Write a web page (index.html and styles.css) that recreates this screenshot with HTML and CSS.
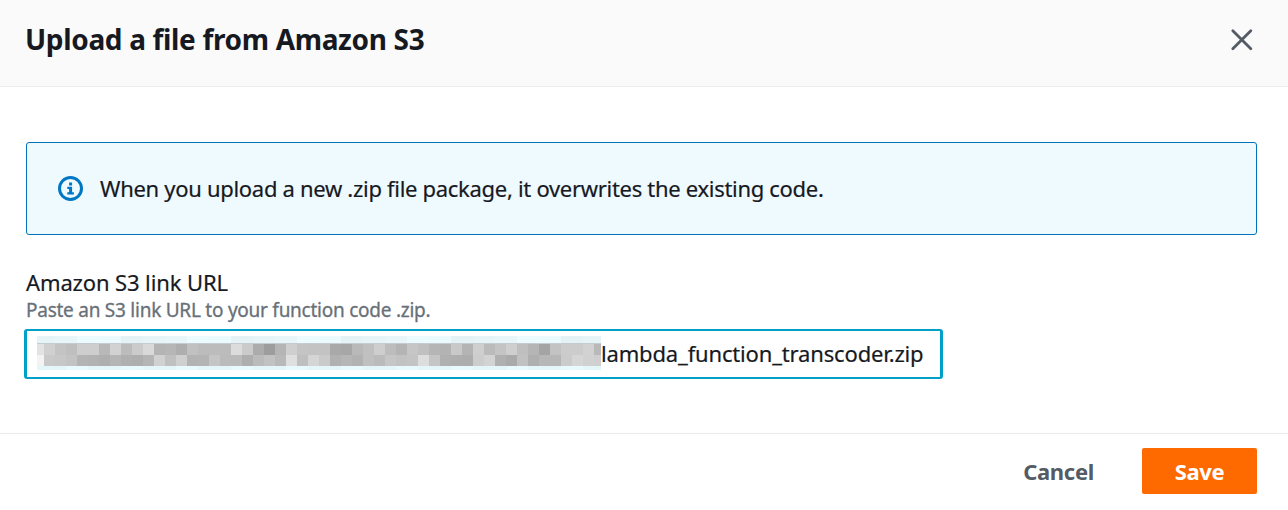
FILE: index.html
```html
<!DOCTYPE html>
<html lang="en">
<head>
<meta charset="utf-8">
<title>Upload a file from Amazon S3</title>
<link rel="stylesheet" href="styles.css">
</head>
<body>
<div class="modal">
  <header class="header">
    <h1 class="title"><span>Upload a file from Amazon S3</span></h1>
    <button class="close" aria-label="Close"><svg width="24" height="24" viewBox="0 0 24 24"><path d="M2.8 2.8 20.8 20.8M20.8 2.8 2.8 20.8"/></svg></button>
  </header>
  <main class="content">
    <div class="alert">
      <svg class="info" width="25" height="25" viewBox="0.5 0.5 25 25"><circle cx="13" cy="13" r="11"/><path d="M11.6 7h3v3h-3zM9.8 11.3h4.8v5.4h1.8v2.3H9.8v-2.3h1.8v-3.1H9.8z"/></svg>
      <span class="alert-text">When you upload a new .zip file package, it overwrites the existing code.</span>
    </div>
    <label class="label"><span>Amazon S3 link URL</span></label>
    <div class="hint"><span>Paste an S3 link URL to your function code .zip.</span></div>
    <div class="input"><svg class="mosaic" width="564" height="34" shape-rendering="crispEdges"></svg><span class="value">lambda_function_transcoder.zip</span></div>
  </main>
  <footer class="footer">
    <button class="cancel"><span>Cancel</span></button>
    <button class="save"><span>Save</span></button>
  </footer>
</div>
<script src="mosaic.js"></script>
</body>
</html>
```
FILE: styles.css
```css
* { box-sizing: border-box; }
body { margin: 0; background: #fff; color: #16191f; font-family: "Noto Sans", sans-serif; }
button { border: 0; background: none; padding: 0; font: inherit; }
span { white-space: nowrap; }
.modal { width: 1288px; height: 510px; display: flex; flex-direction: column; }
.header { height: 87px; background: #fafafa; border-bottom: 1px solid #eaeded; display: flex; justify-content: space-between; align-items: flex-start; padding: 20px 34px 0 25px; }
.title { margin: 0; font-size: 28px; line-height: 38px; font-weight: 700; letter-spacing: -0.33px; }
.close { height: 40px; display: flex; align-items: center; }
.close path { stroke: #545b64; stroke-width: 2.8; stroke-linecap: round; fill: none; }
.content { height: 346px; padding: 55px 31px 0 26px; }
.alert { height: 93px; border: 1px solid #0073bb; border-radius: 3px; background: #effaff; display: flex; align-items: center; padding-left: 31px; gap: 17px; font-size: 22px; }
.info circle { fill: none; stroke: #0077c2; stroke-width: 3; }
.info path { fill: #0077c2; }
.alert-text { letter-spacing: -0.3px; padding-bottom: 2px; -webkit-text-stroke: 0.2px; }
.label { display: block; margin-top: 33px; font-size: 22px; line-height: 28px; letter-spacing: -0.12px; -webkit-text-stroke: 0.2px; }
.hint { font-size: 19px; line-height: 28px; color: #687078; letter-spacing: -0.25px; -webkit-text-stroke: 0.3px; }
.input { margin: 5px 0 0 -2px; width: 919px; height: 50px; border: 2px solid #00a1c9; border-left-width: 3px; border-right-width: 3px; border-radius: 3px; padding: 0 0 0 10px; display: flex; align-items: center; font-size: 22px; }
.value { letter-spacing: -0.16px; padding-bottom: 2px; -webkit-text-stroke: 0.2px; }
.mosaic { flex: none; margin-bottom: 2px; }
.footer { height: 77px; border-top: 1px solid #eaeded; padding: 14px 31px 0 0; display: flex; justify-content: flex-end; gap: 48px; font-size: 22px; font-weight: 700; }
.cancel { height: 46px; color: #545b64; letter-spacing: -0.3px; }
.save { width: 115px; height: 46px; background: #ff6a00; border-radius: 2px; color: #fff; letter-spacing: -0.4px; }
```
FILE: mosaic.js
```javascript
// Pixelated cover over the private part of the URL: one hex grey per 11px cell.
const upper = "e3 d0 c4 bf ce ce b8 d2 bc cb d9 b4 b6 ae c1 bc bc bc dc cb ac 9d b5 cf c4 c3 c3 a9 a7 b9 c0 ce bd b4 c6 c0 b5 b3 c9 b4 cf bb c4 cf bf b5 a4 c3 cc cc d2 b9".split(" ");
const lower = "f3 c9 c7 c3 b4 b2 af b5 b0 ae b5 d1 c0 cf b3 b4 c5 bb ba ae bb c2 b9 df bf d5 ca b1 b6 b2 c0 bb c6 c2 c4 dd c5 b0 ae ad cd d3 b0 aa c1 af b7 b7 cb d5 d1 cf".split(" ");
const pale = ["#e6f4f8", "#e8f5f9", "#ecfcfe", "#ebfbfd", "#e4f2f6"];
const svg = document.querySelector(".mosaic");
function cell(x, y, w, h, fill) {
  const r = document.createElementNS("http://www.w3.org/2000/svg", "rect");
  for (const [k, v] of Object.entries({ x, y, width: w, height: h, fill })) r.setAttribute(k, v);
  svg.appendChild(r);
}
upper.forEach((v, i) => {
  const x = i ? 7 + (i - 1) * 11 : 0;
  const w = i ? 11 : 7;
  const g = lower[i];
  cell(x, 0, w, 7, pale[(i >> 1) % 5]);
  cell(x, 7, w, 12, "#" + v + v + v);
  cell(x, 19, w, 11, "#" + g + g + g);
  cell(x, 30, w, 4, i % 5 < 3 ? "#e3f6fa" : "#e8fafd");
});
cell(0, 7, 564, 1, "#c5cccf");
```
